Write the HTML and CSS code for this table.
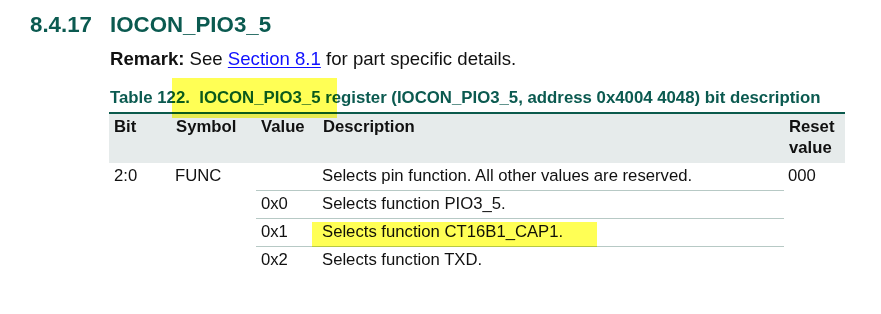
FILE: index.html
```html
<!DOCTYPE html>
<html>
<head>
<meta charset="utf-8">
<link rel="stylesheet" href="styles.css">
</head>
<body>
<div class="page">
  <h2 class="heading"><span class="num">8.4.17</span><span class="title">IOCON_PIO3_5</span></h2>
  <div class="body">
    <p class="remark"><b>Remark:</b> See <a href="#" class="link">Section 8.1</a> for part specific details.</p>
    <p class="caption">Table 122.&nbsp; IOCON_PIO3_5 register (IOCON_PIO3_5, address 0x4004 4048) bit description</p>
    <table class="reg">
      <colgroup>
        <col class="c-bit"><col class="c-sym"><col class="c-val"><col class="c-desc"><col class="c-rst">
      </colgroup>
      <thead>
        <tr><th>Bit</th><th>Symbol</th><th>Value</th><th>Description</th><th>Reset<br>value</th></tr>
      </thead>
      <tbody>
        <tr><td rowspan="4">2:0</td><td rowspan="4">FUNC</td><td class="sep"></td><td class="sep">Selects pin function. All other values are reserved.</td><td rowspan="4">000</td></tr>
        <tr><td class="sep">0x0</td><td class="sep">Selects function PIO3_5.</td></tr>
        <tr><td class="sep">0x1</td><td class="sep">Selects function CT16B1_CAP1.</td></tr>
        <tr><td>0x2</td><td>Selects function TXD.</td></tr>
      </tbody>
    </table>
  </div>
  <div class="hl hl-1"></div>
  <div class="hl hl-2"></div>
</div>
</body>
</html>
```
FILE: styles.css
```css
html, body {
  margin: 0;
  padding: 0;
  background: #ffffff;
}
.page {
  position: relative;
  width: 881px;
  height: 314px;
  overflow: hidden;
  font-family: "Liberation Sans", Arial, sans-serif;
  color: #111111;
}
.heading {
  margin: 0;
  padding: 12px 0 0 30px;
  display: flex;
  font-size: 22.3px;
  line-height: 26px;
  font-weight: bold;
  color: #0b5a50;
}
.num {
  width: 80px;
}
.body {
  padding-left: 109px;
}
.remark {
  margin: 10px 0 0 1px;
  font-size: 18.6px;
  line-height: 22px;
}
.link {
  color: #1010ff;
  text-decoration: underline;
  text-underline-offset: 2px;
}
.caption {
  margin: 18px 0 0 1px;
  font-size: 16.8px;
  line-height: 20px;
  font-weight: bold;
  color: #0b5a50;
  white-space: nowrap;
}
.reg {
  margin-top: 4px;
  border-collapse: collapse;
  border-top: 2px solid #0b5a4c;
  font-size: 16.7px;
  line-height: 20px;
  width: 736px;
  table-layout: fixed;
}
.c-bit { width: 62px; }
.c-sym { width: 85px; }
.c-val { width: 62px; }
.c-desc { width: 466px; }
.c-rst { width: 61px; }
.reg th {
  background: #e6ebeb;
  text-align: left;
  vertical-align: top;
  font-weight: bold;
  line-height: 21px;
  padding: 2px 4px 5px 5px;
  color: #111111;
}
.reg td {
  text-align: left;
  vertical-align: top;
  padding: 3px 4px 4px 4px;
  white-space: nowrap;
}
.reg td:first-child {
  padding-left: 5px;
}
.reg td.sep {
  border-bottom: 1px solid #b7c9c5;
}
.hl {
  position: absolute;
  background: #ffff55;
  mix-blend-mode: multiply;
}
.hl-1 {
  left: 172px;
  top: 78px;
  width: 165px;
  height: 40px;
}
.hl-2 {
  left: 312px;
  top: 222px;
  width: 285px;
  height: 25px;
}
```
